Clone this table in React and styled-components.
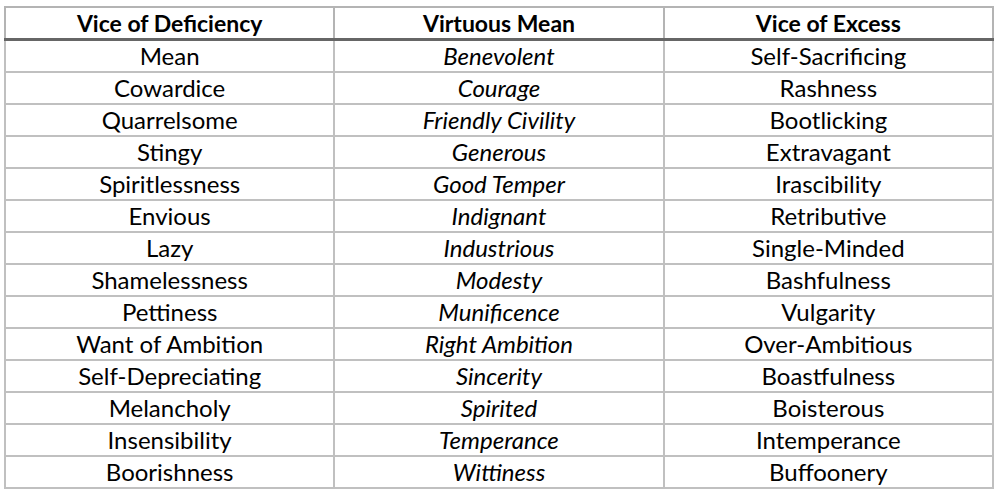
import React from "react";
import styled, { createGlobalStyle } from "styled-components";

const rows = [
  ["Mean", "Benevolent", "Self-Sacrificing"],
  ["Cowardice", "Courage", "Rashness"],
  ["Quarrelsome", "Friendly Civility", "Bootlicking"],
  ["Stingy", "Generous", "Extravagant"],
  ["Spiritlessness", "Good Temper", "Irascibility"],
  ["Envious", "Indignant", "Retributive"],
  ["Lazy", "Industrious", "Single-Minded"],
  ["Shamelessness", "Modesty", "Bashfulness"],
  ["Pettiness", "Munificence", "Vulgarity"],
  ["Want of Ambition", "Right Ambition", "Over-Ambitious"],
  ["Self-Depreciating", "Sincerity", "Boastfulness"],
  ["Melancholy", "Spirited", "Boisterous"],
  ["Insensibility", "Temperance", "Intemperance"],
  ["Boorishness", "Wittiness", "Buffoonery"],
];

const GlobalStyle = createGlobalStyle`
  body {
    margin: 0;
    background: #ffffff;
  }
`;

const Page = styled.div`
  padding: 6px 0 0 4px;
`;

const Table = styled.table`
  border-collapse: collapse;
  table-layout: fixed;
  width: 990px;
  font-family: Lato, "Open Sans", sans-serif;
  font-size: 24px;
  color: #000;
`;

const Head = styled.th`
  height: 30px;
  padding: 0;
  font-size: 23px;
  font-weight: 700;
  text-align: center;
  border: 2px solid #b4b4b4;
  border-bottom: 3px solid #666;
  line-height: 30px;
`;

const Cell = styled.td`
  height: 30px;
  padding: 0;
  text-align: center;
  border: 2px solid #c0c0c0;
  line-height: 30px;
  font-style: ${(p) => (p.$mean ? "italic" : "normal")};
`;

export default function App() {
  return (
    <Page>
      <GlobalStyle />
      <Table>
        <thead>
          <tr>
            <Head>Vice of Deficiency</Head>
            <Head>Virtuous Mean</Head>
            <Head>Vice of Excess</Head>
          </tr>
        </thead>
        <tbody>
          {rows.map((r) => (
            <tr key={r[0]}>
              <Cell>{r[0]}</Cell>
              <Cell $mean>{r[1]}</Cell>
              <Cell>{r[2]}</Cell>
            </tr>
          ))}
        </tbody>
      </Table>
    </Page>
  );
}
